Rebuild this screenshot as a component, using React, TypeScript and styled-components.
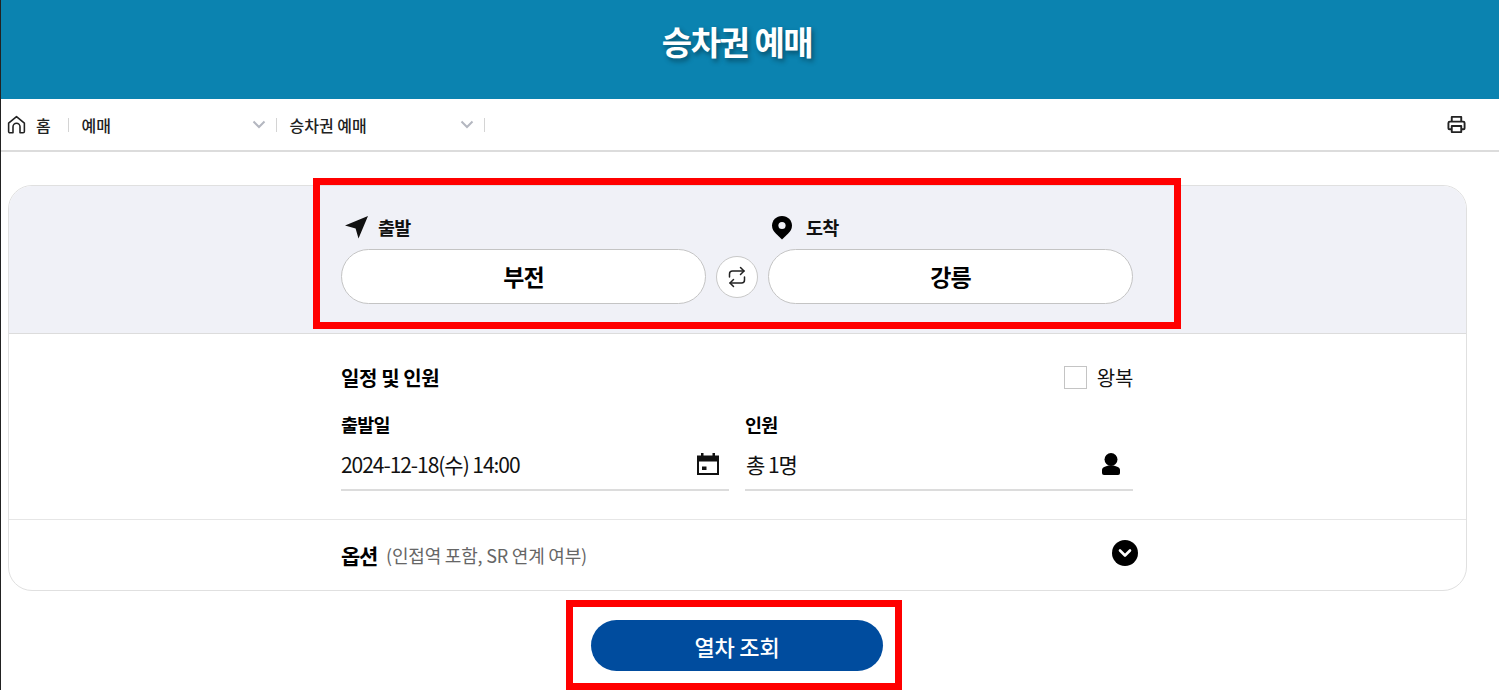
import React from "react";
import styled, { createGlobalStyle } from "styled-components";

const Global = createGlobalStyle`
  html, body { margin: 0; padding: 0; background: #fff; overflow: hidden; }
  body { font-family: "Noto Sans CJK KR", "Noto Sans", sans-serif; color: #000; }
  * { box-sizing: border-box; }
`;

const Page = styled.div`
  position: relative;
  width: 1499px;
  height: 690px;
  overflow: hidden;
  border-left: 1px solid #222;
`;

const Header = styled.header`
  height: 99px;
  background: #0b83b0;
  display: flex;
  align-items: center;
  padding: 0 26px 17px 0;
  justify-content: center;
`;

const Title = styled.h1`
  margin: 0;
  font-size: 33px;
  font-weight: 700;
  letter-spacing: -1.5px;
  line-height: 44px;
  color: #fff;
  text-shadow: 2px 3px 5px rgba(0, 0, 0, 0.4);
`;

const Crumbs = styled.nav`
  height: 53px;
  border-bottom: 2px solid #dcdcdc;
  display: flex;
  align-items: center;
  padding: 0 33px 0 5px;
`;

const HomeItem = styled.div`
  display: flex;
  align-items: center;
  gap: 9px;
  width: 61.5px;
  font-size: 16px;
  font-weight: 500;
  color: #222;
`;

const Crumb = styled.div`
  height: 14px;
  width: 208px;
  display: flex;
  align-items: center;
  justify-content: space-between;
  padding: 0 10px 0 13px;
  border-left: 1px solid #d4d4d4;
  font-size: 16px;
  font-weight: 500;
  letter-spacing: 0;
  color: #222;
`;

const CrumbEnd = styled.div`
  height: 14px;
  flex: 1;
  border-left: 1px solid #d4d4d4;
  display: flex;
  justify-content: flex-end;
  align-items: center;
`;

const Card = styled.section`
  margin: 33px 32px 0 7px;
  height: 406px;
  border: 1px solid #e0e0e0;
  border-radius: 24px;
  overflow: hidden;
`;

const Route = styled.div`
  height: 148px;
  background: #f0f1f7;
  border-bottom: 1px solid #dcdcdc;
  display: flex;
  justify-content: center;
  padding: 19px 1px 0 0;
`;

const RouteInner = styled.div`
  width: 792px;
  display: grid;
  grid-template-columns: 365px 62px 365px;
`;

const Side = styled.div`
  display: flex;
  flex-direction: column;
`;

const SideLabel = styled.div`
  height: 44px;
  display: flex;
  align-items: center;
  gap: 10px;
  padding-left: 3px;
  font-size: 18.500px;
  font-weight: 700;
  letter-spacing: -0.8px;
  color: #111;
`;

const Pill = styled.div`
  height: 55px;
  background: #fff;
  border: 1px solid #c4c4c4;
  border-radius: 28px;
  display: flex;
  align-items: center;
  justify-content: center;
  font-size: 23px;
  font-weight: 700;
  letter-spacing: -0.8px;
  padding-bottom: 2px;
`;

const SwapCell = styled.div`
  padding: 51px 0 0 10px;
`;

const Swap = styled.div`
  width: 42px;
  height: 42px;
  border-radius: 50%;
  background: #fff;
  border: 1px solid #c8c8c8;
  display: flex;
  align-items: center;
  justify-content: center;
`;

const Schedule = styled.div`
  height: 186px;
  border-bottom: 1px solid #e6e6e6;
  display: flex;
  justify-content: center;
  padding-right: 1px;
`;

const Column = styled.div`
  width: 792px;
`;

const ScheduleHead = styled.div`
  height: 43px;
  margin-top: 22px;
  display: flex;
  align-items: center;
  justify-content: space-between;
`;

const Heading = styled.h2`
  margin: 0;
  font-size: 20px;
  font-weight: 700;
  letter-spacing: -0.4px;
`;

const Round = styled.label`
  display: flex;
  align-items: center;
  gap: 10px;
  font-size: 20px;
  font-weight: 400;
  letter-spacing: -0.3px;
  color: #111;
`;

const Box = styled.span`
  width: 23px;
  height: 23px;
  background: #fff;
  border: 1px solid #c4c4c4;
`;

const Fields = styled.div`
  display: grid;
  grid-template-columns: 388px 388px;
  justify-content: space-between;
  margin-top: 7px;
`;

const Field = styled.div`
  display: flex;
  flex-direction: column;
`;

const FieldLabel = styled.div`
  height: 35px;
  margin-bottom: 2px;
  display: flex;
  align-items: center;
  font-size: 18.500px;
  font-weight: 700;
  letter-spacing: -0.8px;
`;

const FieldValue = styled.div<{ $left?: number; $right: number }>`
  height: 48px;
  border-bottom: 2px solid #dcdcdc;
  display: flex;
  align-items: center;
  justify-content: space-between;
  padding: 0 ${(p) => p.$right}px 4px ${(p) => p.$left ?? 0}px;
  font-size: 21px;
  font-weight: 400;
  letter-spacing: -1.05px;
  color: #111;
`;

const Options = styled.div`
  height: 70px;
  display: flex;
  justify-content: center;
  padding-right: 1px;
`;

const OptionsRow = styled.div`
  width: 792px;
  display: flex;
  align-items: center;
  gap: 9px;
  padding-bottom: 1px;
`;

const OptionTitle = styled.span`
  font-size: 21px;
  font-weight: 700;
  letter-spacing: -1.3px;
`;

const OptionNote = styled.span`
  flex: 1;
  font-size: 18px;
  font-weight: 400;
  letter-spacing: -0.2px;
  color: #666;
`;

const Toggle = styled.span`
  width: 26px;
  height: 26px;
  margin: -4px -5px 0 0;
  border-radius: 50%;
  background: #000;
  display: flex;
  align-items: center;
  justify-content: center;
`;

const Actions = styled.div`
  display: flex;
  justify-content: center;
  padding: 29px 26px 0 0;
`;

const Search = styled.button`
  width: 292px;
  height: 51px;
  border: 0;
  border-radius: 26px;
  background: #004c9e;
  color: #fff;
  font-family: inherit;
  font-size: 22px;
  font-weight: 500;
  letter-spacing: -0.2px;
`;

const Mark = styled.div<{ $x: number; $y: number; $w: number; $h: number }>`
  position: absolute;
  left: ${(p) => p.$x}px;
  top: ${(p) => p.$y}px;
  width: ${(p) => p.$w}px;
  height: ${(p) => p.$h}px;
  border: 7px solid #ff0000;
  pointer-events: none;
`;

const Home = () => (
  <svg width="21" height="21" viewBox="0 0 24 24" fill="none" stroke="#222" strokeWidth="1.800" strokeLinejoin="round">
    <path d="M3 10.500 12 3l9 7.500V20a1.500 1.500 0 0 1-1.500 1.500H16v-7a4 4 0 0 0-8 0v7H4.500A1.500 1.500 0 0 1 3 20z" />
  </svg>
);

const Chevron = () => (
  <svg width="14" height="9" viewBox="0 0 14 9" fill="none" stroke="#b4b7c0" strokeWidth="2">
    <path d="M1.500 1.500 7 7l5.500-5.500" />
  </svg>
);

const Printer = () => (
  <svg width="19" height="19" viewBox="0 0 20 20" fill="none" stroke="#222" strokeWidth="2" strokeLinejoin="round">
    <path d="M5 7V2h10v5" />
    <path d="M5 15H2.500A1 1 0 0 1 1.500 14V8.500a1.500 1.500 0 0 1 1.500-1.500h14a1.500 1.500 0 0 1 1.500 1.500V14a1 1 0 0 1-1 1H15" />
    <path d="M5 11.500h10V18H5z" />
  </svg>
);

const Arrow = () => (
  <svg width="24" height="24" viewBox="0 0 24 24" fill="#111">
    <path d="M24 1 14.500 23.500 11.600 13.400 1 10.500z" />
  </svg>
);

const PinIcon = () => (
  <svg width="25" height="25" viewBox="0 0 25 25">
    <path d="M11 1C5.200 1 1 5.300 1 10.800c0 3.200 1.600 5.500 3.800 7.700L11 24.500l6.200-6c2.200-2.200 3.800-4.500 3.800-7.700C21 5.300 16.800 1 11 1z" fill="#000" />
    <circle cx="11" cy="10.500" r="3.600" fill="#f0f1f7" />
  </svg>
);

const SwapIcon = () => (
  <svg width="20" height="22" viewBox="0 0 20 22" fill="none" stroke="#222" strokeWidth="1.500" strokeLinecap="round" strokeLinejoin="round">
    <path d="M13.500 1.500 17 5l-3.500 3.500" />
    <path d="M17 5H5.500A3 3 0 0 0 2.500 8v3" />
    <path d="M6.500 20.500 3 17l3.500-3.500" />
    <path d="M3 17h11.500a3 3 0 0 0 3-3v-3" />
  </svg>
);

const Calendar = () => (
  <svg width="22" height="22" viewBox="0 0 22 22" fill="#111">
    <path
      fillRule="evenodd"
      d="M0 2.500h4V0h2.500v2.500h9V0H18v2.500h4V22H0zM2 8.500V20h18V8.500z"
    />
    <path d="M5 13.500h4.500V17H5z" />
  </svg>
);

const Person = () => (
  <svg width="18" height="22" viewBox="0 0 18 22" fill="#000">
    <circle cx="9" cy="6.500" r="6.500" />
    <path d="M0 20v-3c0-3 4.500-4.500 9-4.500s9 1.500 9 4.500v3a2 2 0 0 1-2 2H2a2 2 0 0 1-2-2z" />
  </svg>
);

const ChevronWhite = () => (
  <svg width="14" height="10" viewBox="0 0 14 10" fill="none" stroke="#fff" strokeWidth="2.600" strokeLinecap="round" strokeLinejoin="round">
    <path d="M2 2.500 7 7.500l5-5" />
  </svg>
);

export default function App() {
  return (
    <Page>
      <Global />
      <Header>
        <Title>승차권 예매</Title>
      </Header>
      <Crumbs>
        <HomeItem>
          <Home />
          <span>홈</span>
        </HomeItem>
        <Crumb>
          <span>예매</span>
          <Chevron />
        </Crumb>
        <Crumb>
          <span>승차권 예매</span>
          <Chevron />
        </Crumb>
        <CrumbEnd>
          <Printer />
        </CrumbEnd>
      </Crumbs>
      <Card>
        <Route>
          <RouteInner>
            <Side>
              <SideLabel>
                <Arrow />
                <span>출발</span>
              </SideLabel>
              <Pill>부전</Pill>
            </Side>
            <SwapCell>
              <Swap>
                <SwapIcon />
              </Swap>
            </SwapCell>
            <Side>
              <SideLabel>
                <PinIcon />
                <span>도착</span>
              </SideLabel>
              <Pill>강릉</Pill>
            </Side>
          </RouteInner>
        </Route>
        <Schedule>
          <Column>
            <ScheduleHead>
              <Heading>일정 및 인원</Heading>
              <Round>
                <Box />
                <span>왕복</span>
              </Round>
            </ScheduleHead>
            <Fields>
              <Field>
                <FieldLabel>출발일</FieldLabel>
                <FieldValue $right={10}>
                  <span>2024-12-18(수) 14:00</span>
                  <Calendar />
                </FieldValue>
              </Field>
              <Field>
                <FieldLabel>인원</FieldLabel>
                <FieldValue $left={1} $right={13}>
                  <span>총 1명</span>
                  <Person />
                </FieldValue>
              </Field>
            </Fields>
          </Column>
        </Schedule>
        <Options>
          <OptionsRow>
            <OptionTitle>옵션</OptionTitle>
            <OptionNote>(인접역 포함, SR 연계 여부)</OptionNote>
            <Toggle>
              <ChevronWhite />
            </Toggle>
          </OptionsRow>
        </Options>
      </Card>
      <Actions>
        <Search>열차 조회</Search>
      </Actions>
      <Mark $x={312} $y={178} $w={868} $h={151} />
      <Mark $x={565} $y={600} $w={336} $h={90} />
    </Page>
  );
}
